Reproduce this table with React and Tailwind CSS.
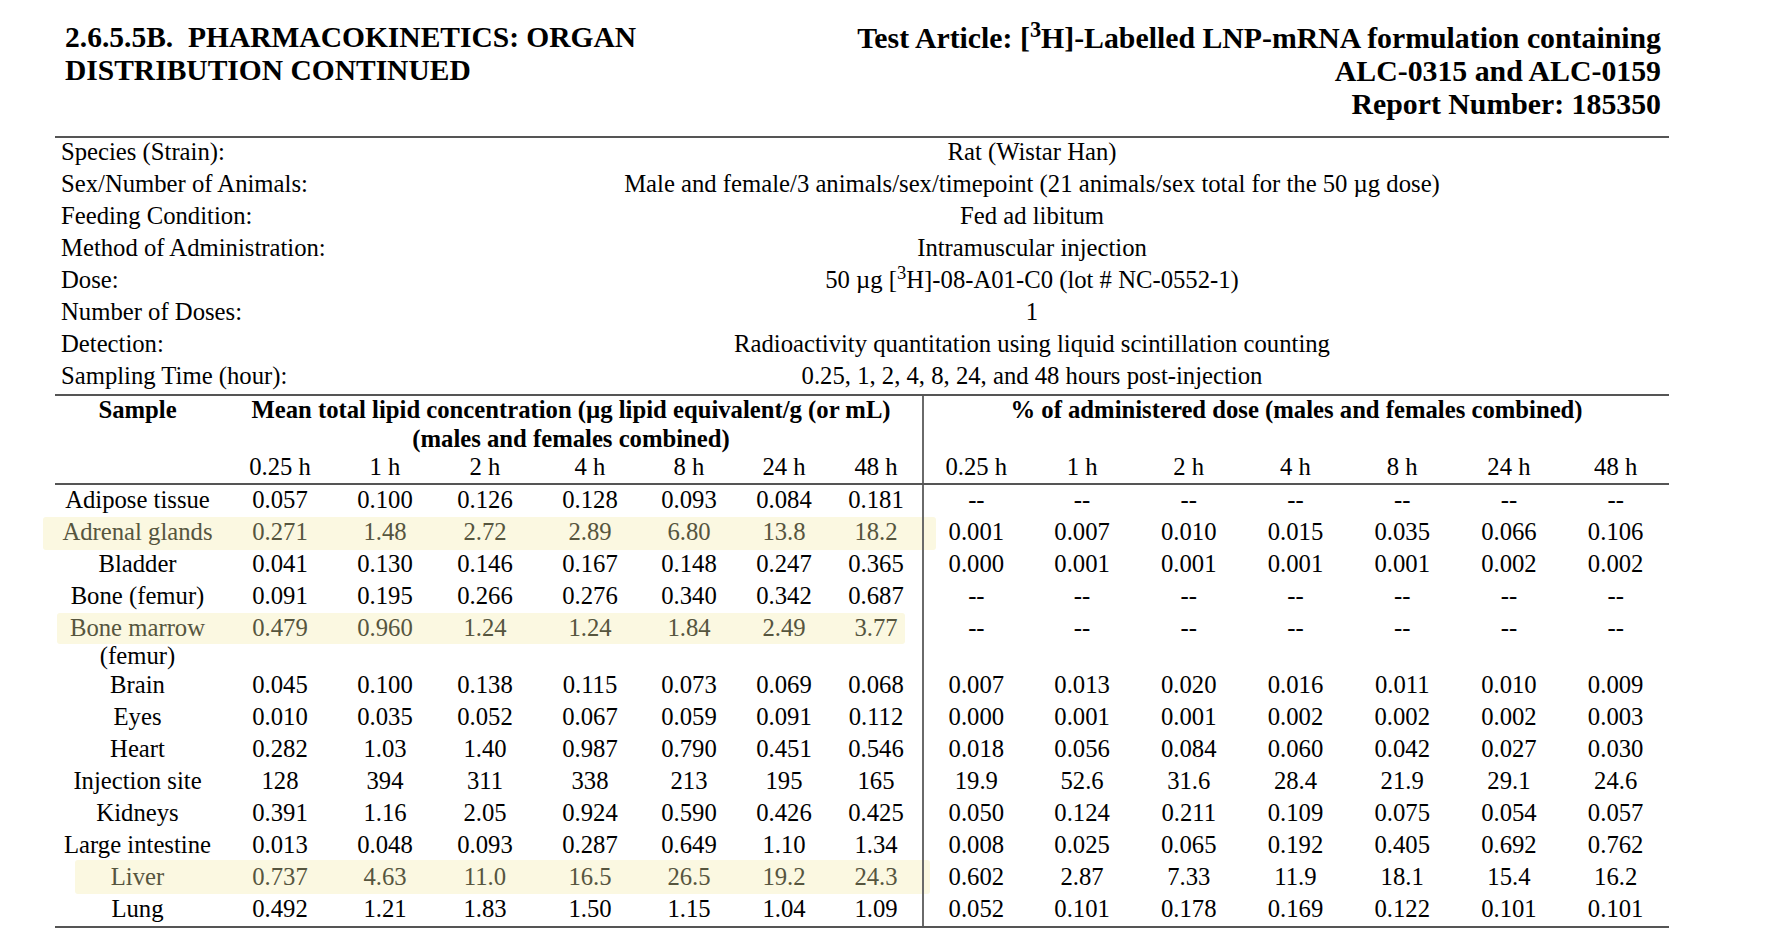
import React from "react";

const COLS = "grid grid-cols-[165px_120px_90px_110px_100px_98px_92px_92px_repeat(7,1fr)]";
const TIMES = ["0.25 h", "1 h", "2 h", "4 h", "8 h", "24 h", "48 h"];
const DASH = ["--", "--", "--", "--", "--", "--", "--"];

const info = [
  ["Species (Strain):", "Rat (Wistar Han)"],
  ["Sex/Number of Animals:", "Male and female/3 animals/sex/timepoint (21 animals/sex total for the 50 µg dose)"],
  ["Feeding Condition:", "Fed ad libitum"],
  ["Method of Administration:", "Intramuscular injection"],
  [
    "Dose:",
    <>
      50 µg [<sup>3</sup>H]-08-A01-C0 (lot # NC-0552-1)
    </>,
  ],
  ["Number of Doses:", "1"],
  ["Detection:", "Radioactivity quantitation using liquid scintillation counting"],
  ["Sampling Time (hour):", "0.25, 1, 2, 4, 8, 24, and 48 hours post-injection"],
];

const rows = [
  { name: "Adipose tissue", left: ["0.057", "0.100", "0.126", "0.128", "0.093", "0.084", "0.181"], right: DASH },
  {
    name: "Adrenal glands",
    left: ["0.271", "1.48", "2.72", "2.89", "6.80", "13.8", "18.2"],
    right: ["0.001", "0.007", "0.010", "0.015", "0.035", "0.066", "0.106"],
    hl: "left-[-12px] w-[893px] top-0 h-[33px]",
  },
  {
    name: "Bladder",
    left: ["0.041", "0.130", "0.146", "0.167", "0.148", "0.247", "0.365"],
    right: ["0.000", "0.001", "0.001", "0.001", "0.001", "0.002", "0.002"],
  },
  { name: "Bone (femur)", left: ["0.091", "0.195", "0.266", "0.276", "0.340", "0.342", "0.687"], right: DASH },
  {
    name: "Bone marrow",
    sub: "(femur)",
    left: ["0.479", "0.960", "1.24", "1.24", "1.84", "2.49", "3.77"],
    right: DASH,
    hl: "left-[2px] w-[848px] top-0 h-[31px]",
  },
  {
    name: "Brain",
    left: ["0.045", "0.100", "0.138", "0.115", "0.073", "0.069", "0.068"],
    right: ["0.007", "0.013", "0.020", "0.016", "0.011", "0.010", "0.009"],
  },
  {
    name: "Eyes",
    left: ["0.010", "0.035", "0.052", "0.067", "0.059", "0.091", "0.112"],
    right: ["0.000", "0.001", "0.001", "0.002", "0.002", "0.002", "0.003"],
  },
  {
    name: "Heart",
    left: ["0.282", "1.03", "1.40", "0.987", "0.790", "0.451", "0.546"],
    right: ["0.018", "0.056", "0.084", "0.060", "0.042", "0.027", "0.030"],
  },
  {
    name: "Injection site",
    left: ["128", "394", "311", "338", "213", "195", "165"],
    right: ["19.9", "52.6", "31.6", "28.4", "21.9", "29.1", "24.6"],
  },
  {
    name: "Kidneys",
    left: ["0.391", "1.16", "2.05", "0.924", "0.590", "0.426", "0.425"],
    right: ["0.050", "0.124", "0.211", "0.109", "0.075", "0.054", "0.057"],
  },
  {
    name: "Large intestine",
    left: ["0.013", "0.048", "0.093", "0.287", "0.649", "1.10", "1.34"],
    right: ["0.008", "0.025", "0.065", "0.192", "0.405", "0.692", "0.762"],
  },
  {
    name: "Liver",
    left: ["0.737", "4.63", "11.0", "16.5", "26.5", "19.2", "24.3"],
    right: ["0.602", "2.87", "7.33", "11.9", "18.1", "15.4", "16.2"],
    hl: "left-[20px] w-[855px] top-[-2px] h-[34px]",
  },
  {
    name: "Lung",
    left: ["0.492", "1.21", "1.83", "1.50", "1.15", "1.04", "1.09"],
    right: ["0.052", "0.101", "0.178", "0.169", "0.122", "0.101", "0.101"],
  },
];

function DataRow({ row }) {
  const tone = row.hl ? "text-[#56553e]" : "text-black";
  return (
    <div className={`${COLS} relative items-start`}>
      {row.hl && <div className={`absolute -z-10 rounded-[3px] bg-[#fbf8e1] ${row.hl}`} />}
      {row.sub ? (
        <div className="pt-[1px] text-center leading-[28px]">
          <span className={tone}>{row.name}</span>
          <br />
          <span>{row.sub}</span>
        </div>
      ) : (
        <div className={`h-[32px] text-center leading-[30px] whitespace-nowrap ${tone}`}>{row.name}</div>
      )}
      {row.left.map((v, i) => (
        <div key={"l" + i} className={`h-[32px] text-center leading-[30px] ${tone}`}>
          {v}
        </div>
      ))}
      {row.right.map((v, i) => (
        <div
          key={"r" + i}
          className={`text-center leading-[30px] ${i === 0 ? "self-stretch border-l-2 border-[#6a6a6a]" : "h-[32px]"}`}
        >
          {v}
        </div>
      ))}
    </div>
  );
}

export default function App() {
  return (
    <div className="min-h-screen bg-white font-['Liberation_Serif',serif] text-black">
      <div className="ml-[55px] w-[1614px] pt-[21px]">
        <div className="flex justify-between pl-[10px] pr-[8px] text-[29.5px] font-bold leading-[33px]">
          <div className="whitespace-pre">
            {"2.6.5.5B.  PHARMACOKINETICS: ORGAN"}
            <br />
            DISTRIBUTION CONTINUED
          </div>
          <div className="text-right text-[29.8px]">
            Test Article: [<sup>3</sup>H]-Labelled LNP-mRNA formulation containing
            <br />
            ALC-0315 and ALC-0159
            <br />
            Report Number: 185350
          </div>
        </div>

        <div className="relative z-0 mt-[16px] text-[24.7px]">
          <div className="border-t-2 border-[#555]">
            {info.map(([label, value]) => (
              <div key={label} className="grid h-[32px] grid-cols-[340px_1fr] leading-[28px]">
                <div className="pl-[6px]">{label}</div>
                <div className="text-center">{value}</div>
              </div>
            ))}
          </div>

          <div className={`${COLS} border-t-2 border-b-2 border-[#555] leading-[28.5px]`}>
            <div className="font-bold text-center">Sample</div>
            <div className="col-span-7 row-span-2 text-center font-bold">
              Mean total lipid concentration (µg lipid equivalent/g (or mL)
              <br />
              (males and females combined)
            </div>
            <div className="col-span-7 row-span-2 border-l-2 border-[#6a6a6a] text-center font-bold">
              % of administered dose (males and females combined)
            </div>
            <div />
            <div className="pb-[1px]" />
            {TIMES.map((t) => (
              <div key={"lt" + t} className="pb-[1px] text-center">
                {t}
              </div>
            ))}
            {TIMES.map((t, i) => (
              <div key={"rt" + t} className={`pb-[1px] text-center ${i === 0 ? "border-l-2 border-[#6a6a6a]" : ""}`}>
                {t}
              </div>
            ))}
          </div>

          <div className="border-b-2 border-[#555]">
            {rows.map((r) => (
              <DataRow key={r.name} row={r} />
            ))}
          </div>
        </div>
      </div>
    </div>
  );
}
